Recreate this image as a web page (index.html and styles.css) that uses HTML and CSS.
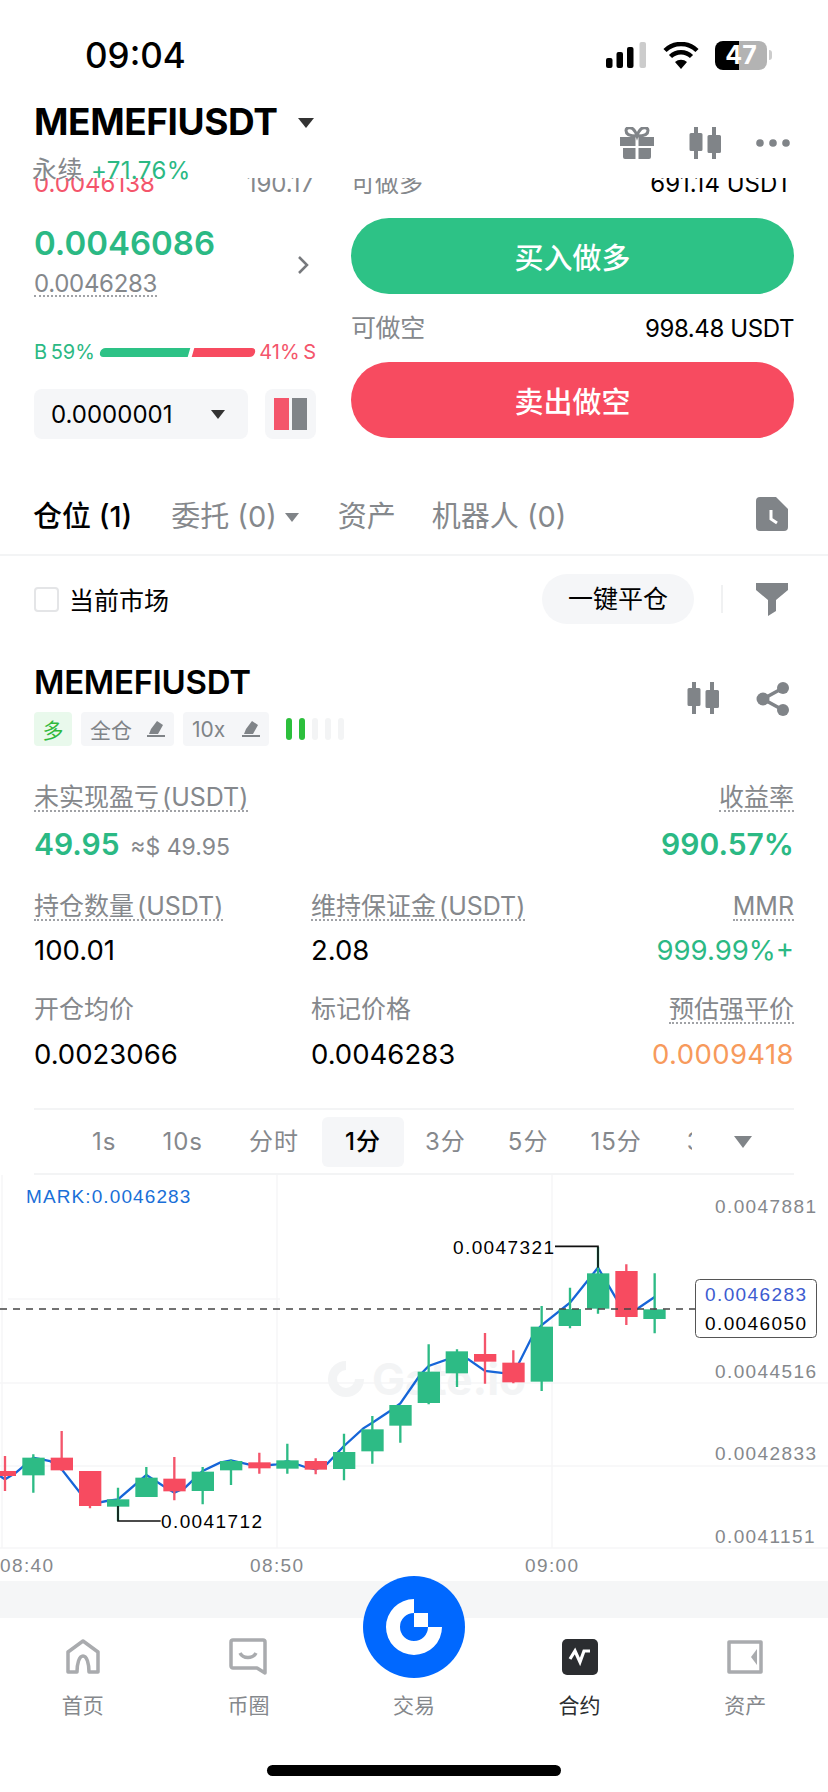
FILE: index.html
```html
<!DOCTYPE html>
<html lang="zh-CN">
<head>
    <meta charset="UTF-8">
    <meta name="viewport" content="width=device-width, initial-scale=1.0">
    <title>MEMEFIUSDT</title>
    <link rel="stylesheet" href="styles.css">
</head>
<body>

<div id="page">
    <div id="top">
        <div class="status-bar">
            <span class="clock">09:04</span>
            <div class="status-icons">
                <svg class="signal" width="40" height="26" viewBox="0 0 40 26">
                    <rect x="0" y="16" width="6.5" height="10" rx="2" fill="#000"/>
                    <rect x="10.5" y="10" width="6.5" height="16" rx="2" fill="#000"/>
                    <rect x="21" y="5" width="6.5" height="21" rx="2" fill="#000"/>
                    <rect x="33.5" y="0" width="6.5" height="26" rx="2" fill="#ccc"/>
                </svg>
                <svg class="wifi" width="36" height="27" viewBox="0 0 36 27">
                    <path d="M18 27l-6-7a9 9 0 0 1 12 0z" fill="#000"/>
                    <path d="M7.5 14.5a15 15 0 0 1 21 0" fill="none" stroke="#000" stroke-width="4.5"/>
                    <path d="M2 8.5a23 23 0 0 1 32 0" fill="none" stroke="#000" stroke-width="4.5"/>
                </svg>
                <span class="battery">47</span>
                <span class="battery-cap"></span>
            </div>
        </div>
        <div class="head-row">
            <div>
                <div class="pair-title">MEMEFIUSDT <span class="caret caret-title"></span></div>
                <div class="pair-sub"><span class="perp">永续</span> <span class="up">+71.76%</span></div>
            </div>
            <div class="head-icons">
                <svg width="34" height="32" viewBox="0 0 34 32" fill="#808488">
                    <path d="M0 10h15.5v9H0zM18.500 10H34v9H18.500zM3 21h12.500v11H5a2 2 0 0 1-2-2zM18.500 21H31v9a2 2 0 0 1-2 2H18.500z"/>
                    <path d="M16 9C10 9 6 7 6 3.500 6 0 11 0 13 2c2 1.500 3 4 4 7 1-3 2-5.500 4-7 2-2 7-2 7 1.500C28 7 24 9 18 9z" fill="none" stroke="#808488" stroke-width="3"/>
                </svg>
                <svg width="32" height="32" viewBox="0 0 32 32" fill="#808488">
                    <path d="M5 0h4v6h3a1.500 1.500 0 0 1 1.500 1.500v15A1.500 1.500 0 0 1 12 24H9v8H5v-8H2a1.500 1.500 0 0 1-1.500-1.500v-15A1.500 1.500 0 0 1 2 6h3z"/>
                    <path d="M23 0h4v8h3.500A1.500 1.500 0 0 1 32 9.500v15a1.500 1.500 0 0 1-1.500 1.500H27v6h-4v-6h-3a1.500 1.500 0 0 1-1.500-1.500v-15A1.500 1.500 0 0 1 20 8h3z"/>
                </svg>
                <svg width="34" height="32" viewBox="0 0 34 32" fill="#808488">
                    <circle cx="4" cy="16" r="3.800"/><circle cx="17" cy="16" r="3.800"/><circle cx="30" cy="16" r="3.800"/>
                </svg>
            </div>
        </div>
    </div>

    <div class="trade-panel">
        <div class="left-col">
            <div class="clip-row"><span class="down">0.0046138</span><span class="muted">190.17</span></div>
            <div class="price-row">
                <div>
                    <div class="last-price">0.0046086</div>
                    <div class="ref-price"><span>0.0046283</span></div>
                </div>
                <svg class="chevron" width="14" height="22" viewBox="0 0 14 22"><path d="M3 3l8 8-8 8" fill="none" stroke="#77797d" stroke-width="2.500"/></svg>
            </div>
            <div class="ratio-row">
                <span class="up">B 59%</span>
                <div class="ratio-bar"><i class="ratio-buy"></i><i class="ratio-sell"></i></div>
                <span class="down">41% S</span>
            </div>
            <div class="depth-row">
                <div class="depth-select"><span>0.0000001</span><span class="caret caret-dark"></span></div>
                <div class="depth-toggle"><i class="toggle-red"></i><i class="toggle-gray"></i></div>
            </div>
        </div>
        <div class="right-col">
            <div class="clip-row"><span class="muted">可做多</span><span>691.14 USDT</span></div>
            <button type="button" class="trade-btn buy-btn">买入做多</button>
            <div class="avail-row"><span class="muted">可做空</span><span>998.48 USDT</span></div>
            <button type="button" class="trade-btn sell-btn">卖出做空</button>
        </div>
    </div>

    <div class="tabs">
        <span class="tab tab-active">仓位 (1)</span>
        <span class="tab tab-orders">委托 (0)<span class="caret caret-gray"></span></span>
        <span class="tab tab-assets">资产</span>
        <span class="tab tab-bots">机器人 (0)</span>
        <svg class="tab-icon" width="32" height="34" viewBox="0 0 32 34">
            <path d="M4 0h16l12 12v18a4 4 0 0 1-4 4H4a4 4 0 0 1-4-4V4a4 4 0 0 1 4-4z" fill="#808488"/>
            <path d="M15 13v9l6 4" fill="none" stroke="#fff" stroke-width="3"/>
        </svg>
    </div>

    <div class="filter-row">
        <span class="check"></span>
        <span class="filter-label">当前市场</span>
        <span class="close-all">一键平仓</span>
        <span class="filter-sep"></span>
        <svg width="32" height="33" viewBox="0 0 32 33"><path d="M0 0H32V7L20 17V28L12 33V17L0 7Z" fill="#808488"/></svg>
    </div>

    <div class="position-head">
        <div>
            <div class="position-name">MEMEFIUSDT</div>
            <div class="tag-row">
                <span class="tag tag-long">多</span>
                <span class="tag tag-margin">全仓
                    <svg width="18" height="16" viewBox="0 0 18 16" fill="#808488"><path d="M10 0l6 4-5 9H2l2-5zM0 14h18v2H0z"/></svg>
                </span>
                <span class="tag tag-leverage">10x
                    <svg width="18" height="16" viewBox="0 0 18 16" fill="#808488"><path d="M10 0l6 4-5 9H2l2-5zM0 14h18v2H0z"/></svg>
                </span>
                <div class="adl">
                    <i class="on"></i><i class="on"></i><i></i><i></i><i></i>
                </div>
            </div>
        </div>
        <div class="position-icons">
            <svg width="32" height="32" viewBox="0 0 32 32" fill="#808488">
                <path d="M5 0h4v6h3a1.500 1.500 0 0 1 1.500 1.500v15A1.500 1.500 0 0 1 12 24H9v8H5v-8H2a1.500 1.500 0 0 1-1.500-1.500v-15A1.500 1.500 0 0 1 2 6h3z"/>
                <path d="M23 0h4v8h3.500A1.500 1.500 0 0 1 32 9.500v15a1.500 1.500 0 0 1-1.500 1.500H27v6h-4v-6h-3a1.500 1.500 0 0 1-1.500-1.500v-15A1.500 1.500 0 0 1 20 8h3z"/>
            </svg>
            <svg width="34" height="34" viewBox="0 0 34 34" fill="#808488">
                <path d="M27 6L7 17l20 11" fill="none" stroke="#808488" stroke-width="3.500"/>
                <circle cx="27" cy="6" r="6"/><circle cx="7" cy="17" r="6.500"/><circle cx="27" cy="28" r="6"/>
            </svg>
        </div>
    </div>

    <div class="stat-row stat-row-1">
        <div><div class="stat-label"><span>未实现盈亏 (USDT)</span></div><div class="stat-value big up">49.95 <small>≈$ 49.95</small></div></div>
        <div></div>
        <div class="stat-right"><div class="stat-label"><span>收益率</span></div><div class="stat-value big up">990.57%</div></div>
    </div>
    <div class="stat-row stat-row-2">
        <div><div class="stat-label"><span>持仓数量 (USDT)</span></div><div class="stat-value">100.01</div></div>
        <div><div class="stat-label"><span>维持保证金 (USDT)</span></div><div class="stat-value">2.08</div></div>
        <div class="stat-right"><div class="stat-label"><span>MMR</span></div><div class="stat-value up">999.99%+</div></div>
    </div>
    <div class="stat-row stat-row-3">
        <div><div class="stat-label plain">开仓均价</div><div class="stat-value">0.0023066</div></div>
        <div><div class="stat-label plain">标记价格</div><div class="stat-value">0.0046283</div></div>
        <div class="stat-right"><div class="stat-label"><span>预估强平价</span></div><div class="stat-value liq">0.0009418</div></div>
    </div>

    <div class="intervals">
        <div class="interval-list">
            <span>1s</span><span>10s</span><span>分时</span><span class="active">1分</span><span class="tight">3分</span><span class="tight">5分</span><span class="tight">15分</span><span class="cut">30分</span>
        </div>
        <span class="caret caret-interval"></span>
    </div>

    <svg class="chart" width="828" height="406" viewBox="0 1174 828 406">
        <g class="grid-lines">
            <path d="M8 1298H280M0 1382H828M0 1465H828M0 1547H828M2 1174V1547M277 1174V1547M552 1174V1547"/>
        </g>

        <!-- watermark -->
        <g class="watermark">
            <path d="M346 1360a18 18 0 1 0 18 18h-9a9 9 0 1 1-9-9z"/>
            <text x="372" y="1394">Gate.io</text>
        </g>

        <!-- candles, traced at 3x so the group is scaled back down -->
        <g transform="translate(0 1170) scale(.33333)">
            <polyline class="mark-line" points="0,915 15,925 48,905 100,860 150,870 185,895 240,965 270,1000 320,990 354,985 439,912 490,945 523,965 555,950 608,900 660,875 693,868 745,880 778,885 830,880 862,870 915,888 947,895 980,880 1032,825 1090,772 1117,755 1170,720 1201,697 1260,612 1286,585 1371,555 1405,565 1455,600 1540,610 1600,490 1625,462 1710,395 1794,290 1850,385 1879,430 1910,415 1964,378"/>
            <path class="wick-red" d="M15 855V960M185 780V900M270 900V1012M523 858V988M778 845V908M947 862V910M1455 486V638M1540 538V637M1879 280V462"/>
            <path class="wick-green" d="M100 850V965M354 950V1050M439 888V978M608 888V1000M693 866V942M862 818V908M1032 788V928M1117 735V878M1201 702V815M1286 520V700M1371 535V648M1625 405V660M1710 350V472M1794 228V428M1964 307V487"/>
            <g class="body-red">
                <rect x="-18" y="900" width="66" height="15"/>
                <rect x="152" y="860" width="67" height="38"/>
                <rect x="237" y="900" width="67" height="105"/>
                <rect x="490" y="923" width="67" height="38"/>
                <rect x="745" y="874" width="67" height="18"/>
                <rect x="914" y="870" width="67" height="26"/>
                <rect x="1422" y="549" width="67" height="23"/>
                <rect x="1507" y="575" width="67" height="59"/>
                <rect x="1846" y="300" width="67" height="138"/>
            </g>
            <g class="body-green">
                <rect x="67" y="860" width="67" height="53"/>
                <rect x="321" y="985" width="67" height="22"/>
                <rect x="406" y="920" width="67" height="58"/>
                <rect x="575" y="902" width="67" height="58"/>
                <rect x="660" y="870" width="67" height="28"/>
                <rect x="829" y="868" width="67" height="25"/>
                <rect x="999" y="843" width="67" height="51"/>
                <rect x="1084" y="775" width="67" height="66"/>
                <rect x="1168" y="702" width="67" height="62"/>
                <rect x="1253" y="602" width="67" height="94"/>
                <rect x="1337" y="541" width="67" height="66"/>
                <rect x="1592" y="467" width="67" height="165"/>
                <rect x="1676" y="414" width="67" height="51"/>
                <rect x="1761" y="307" width="67" height="106"/>
                <rect x="1930" y="415" width="67" height="29"/>
            </g>
            <path class="pointer" d="M354 1005V1050H482M1794 290V226H1665"/>
        </g>

        <path class="price-line" d="M0 1308H695"/>

        <text class="mark-text" x="26" y="1202">MARK:0.0046283</text>
        <text class="axis" x="715" y="1212">0.0047881</text>
        <text class="axis" x="715" y="1377">0.0044516</text>
        <text class="axis" x="715" y="1459">0.0042833</text>
        <text class="axis" x="715" y="1542">0.0041151</text>
        <text class="hilo" x="161" y="1527">0.0041712</text>
        <text class="hilo" x="453" y="1253">0.0047321</text>
        <rect class="price-box" x="695.500" y="1278.500" width="121" height="58" rx="4"/>
        <text class="box-mark" x="705" y="1300">0.0046283</text>
        <text class="box-last" x="705" y="1329">0.0046050</text>
        <text class="time" x="0" y="1571">08:40</text>
        <text class="time" x="250" y="1571">08:50</text>
        <text class="time" x="525" y="1571">09:00</text>
    </svg>

    <div class="gray-band"></div>

    <div class="bottom-nav">
        <div class="nav-item">
            <svg width="36" height="38" viewBox="0 0 36 38"><path d="M3 34V14L18 3l15 11v20h-9c0-8-2-16-6-16s-6 8-6 16z" fill="none" stroke="#a9abae" stroke-width="3.500" stroke-linejoin="round"/></svg>
            <span>首页</span>
        </div>
        <div class="nav-item">
            <svg width="38" height="38" viewBox="0 0 38 38"><path d="M2 4a2 2 0 0 1 2-2h30a2 2 0 0 1 2 2v31l-8-5H4a2 2 0 0 1-2-2z" fill="none" stroke="#a9abae" stroke-width="3.500" stroke-linejoin="round"/><path d="M11 15c3 6 13 6 16 0" fill="none" stroke="#a9abae" stroke-width="3.500"/></svg>
            <span>币圈</span>
        </div>
        <div class="nav-item">
            <div class="nav-spacer"></div>
            <span>交易</span>
            <div class="gate-btn">
                <svg width="102" height="102" viewBox="0 0 102 102"><path d="M51 23A28 28 0 1 0 79 51H65A14 14 0 1 1 51 37Z" fill="#fff"/><rect x="51" y="37" width="14" height="14" fill="#fff"/></svg>
            </div>
        </div>
        <div class="nav-item nav-active">
            <svg width="36" height="38" viewBox="0 0 36 38"><rect width="36" height="36" y="1" rx="5" fill="#2b2d30"/><path d="M8 22l5-8 5 11 4-11 6 0" transform="translate(0 -1)" fill="none" stroke="#fff" stroke-width="3.200"/></svg>
            <span>合约</span>
        </div>
        <div class="nav-item">
            <svg width="38" height="36" viewBox="0 0 38 36"><path d="M3 3h32v30H3z" fill="none" stroke="#a9abae" stroke-width="3.500" stroke-linejoin="round"/><path d="M31 10l-6 8 6 8z" fill="#a9abae"/></svg>
            <span>资产</span>
        </div>
    </div>

    <div class="home-bar"></div>
</div>

</body>
</html>
```

FILE: styles.css
```css
* {
    box-sizing: border-box;
}

body {
    margin: 0;
    padding: 0;
    background-color: #fff;
    font-family: 'Inter', 'Noto Sans CJK SC', sans-serif;
    color: #000;
}

#page {
    width: 828px;
    height: 1792px;
    overflow: hidden;
    position: relative;
}

i {
    display: block;
}

.up {
    color: #2bb984;
}

.down {
    color: #f4556b;
}

.muted {
    color: #85888c;
}

/* carets */
.caret {
    display: inline-block;
    width: 0;
    height: 0;
    border-style: solid;
    border-color: #333 transparent transparent transparent;
}

.caret-title {
    border-width: 10px 8px 0 8px;
    margin-left: 12px;
    vertical-align: 7px;
}

.caret-dark {
    border-width: 9px 7px 0 7px;
}

.caret-gray {
    border-width: 9px 7px 0 7px;
    border-top-color: #808488;
    margin-left: 8px;
    vertical-align: 5px;
}

.caret-interval {
    border-width: 12px 9px 0 9px;
    border-top-color: #808488;
    margin-left: 42px;
}

/* header */
#top {
    height: 178px;
    position: relative;
    z-index: 1;
    background-color: #fff;
}

.status-bar {
    height: 104px;
    display: flex;
    justify-content: space-between;
    padding: 36px 56px 0 85px;
}

.clock {
    font-size: 35px;
    font-weight: 500;
    line-height: 38px;
}

.status-icons {
    display: flex;
    align-items: center;
    height: 38px;
}

.wifi {
    margin-left: 17px;
}

.battery {
    width: 52px;
    height: 29px;
    margin-left: 16px;
    border-radius: 8px;
    background: linear-gradient(90deg, #000 46%, #b3b3b3 46%);
    color: #fff;
    font-size: 25px;
    font-weight: 700;
    line-height: 29px;
    text-align: center;
}

.battery-cap {
    width: 3px;
    height: 10px;
    margin-left: 2px;
    border-radius: 0 3px 3px 0;
    background-color: #ccc;
}

.head-row {
    display: flex;
    justify-content: space-between;
    padding: 0 38px 0 34px;
}

.pair-title {
    font-size: 37px;
    font-weight: 700;
    line-height: 36px;
    letter-spacing: -0.4px;
    white-space: nowrap;
}

.pair-sub {
    margin-top: 14px;
    margin-left: -2px;
    font-size: 24px;
    line-height: 32px;
    letter-spacing: 0.4px;
    white-space: nowrap;
}

.perp {
    color: #85888c;
    font-size: 25px;
    margin-right: 1px;
}

.head-icons {
    display: flex;
    gap: 35px;
    margin-top: 23px;
}

/* trade panel */
.trade-panel {
    display: grid;
    grid-template-columns: 282px 443px;
    column-gap: 35px;
    padding: 0 34px;
}

.clip-row {
    height: 16px;
    overflow: hidden;
    display: flex;
    justify-content: space-between;
    align-items: flex-end;
    padding-right: 2px;
    font-size: 24px;
    line-height: 20px;
}

.price-row {
    display: flex;
    justify-content: space-between;
    align-items: center;
    margin-top: 29px;
    padding-right: 6px;
}

.last-price {
    color: #2bb984;
    font-size: 33px;
    font-weight: 600;
    line-height: 40px;
}

.ref-price {
    margin-top: 9px;
    color: #85888c;
    font-size: 24px;
    line-height: 24px;
    letter-spacing: -0.3px;
}

.ref-price span {
    display: inline-block;
    line-height: 22px;
    border-bottom: 2px dotted #a0a2a6;
}

.chevron {
    margin-top: 10px;
}

.ratio-row {
    display: flex;
    justify-content: space-between;
    align-items: center;
    height: 20px;
    margin-top: 45px;
    font-size: 20px;
    word-spacing: -2px;
    white-space: nowrap;
}

.ratio-bar {
    display: flex;
    gap: 4px;
    flex: 1;
    margin: 0 5px;
    height: 9px;
}

.ratio-buy {
    flex: 59;
    background-color: #2dc286;
    border-radius: 5px 0 0 5px;
    transform: skewX(-16deg);
}

.ratio-sell {
    flex: 41;
    background-color: #f74b60;
    border-radius: 0 5px 5px 0;
    transform: skewX(-16deg);
}

.depth-row {
    display: flex;
    justify-content: space-between;
    margin-top: 27px;
}

.depth-select {
    width: 214px;
    height: 50px;
    padding: 0 23px 0 17px;
    display: flex;
    justify-content: space-between;
    align-items: center;
    border-radius: 8px;
    background-color: #f5f6f8;
    font-size: 24px;
}

.depth-toggle {
    width: 51px;
    height: 50px;
    display: flex;
    justify-content: center;
    align-items: center;
    gap: 3px;
    border-radius: 8px;
    background-color: #f5f6f8;
}

.depth-toggle i {
    width: 15px;
    height: 32px;
}

.toggle-red {
    background-color: #f4556b;
}

.toggle-gray {
    background-color: #808488;
}

.right-col {
    min-width: 0;
}

.trade-btn {
    display: block;
    width: 100%;
    height: 76px;
    border: none;
    border-radius: 38px;
    color: #fff;
    font-family: inherit;
    font-size: 29px;
    font-weight: 500;
}

.buy-btn {
    margin-top: 24px;
    background-color: #2dc286;
}

.sell-btn {
    background-color: #f74b60;
}

.avail-row {
    height: 68px;
    display: flex;
    justify-content: space-between;
    align-items: center;
    font-size: 24px;
    letter-spacing: -0.4px;
}

.avail-row .muted {
    font-size: 25px;
    margin-bottom: 4px;
}

/* tabs */
.tabs {
    height: 80px;
    margin-top: 37px;
    padding: 0 40px 3px 33px;
    display: flex;
    align-items: center;
    border-bottom: 2px solid #f3f4f5;
    font-size: 29px;
    color: #85888c;
    white-space: nowrap;
}

.tab-active {
    color: #000;
    font-weight: 500;
}

.tab-orders {
    margin-left: 39px;
}

.tab-assets {
    margin-left: 39px;
}

.tab-bots {
    margin-left: 36px;
}

.tab-icon {
    margin-left: auto;
}

.filter-row {
    height: 88px;
    padding: 0 40px 2px 34px;
    display: flex;
    align-items: center;
}

.check {
    width: 25px;
    height: 25px;
    border: 2px solid #e4e5e7;
    border-radius: 4px;
}

.filter-label {
    margin-left: 10px;
    font-size: 25px;
}

.close-all {
    margin-left: auto;
    width: 152px;
    height: 50px;
    border-radius: 25px;
    background-color: #f5f6f8;
    font-size: 25px;
    line-height: 50px;
    text-align: center;
}

.filter-sep {
    width: 2px;
    height: 28px;
    margin: 0 33px 0 27px;
    background-color: #f0f1f2;
}

/* position */
.position-head {
    margin-top: 19px;
    padding: 0 38px 0 34px;
    display: flex;
    justify-content: space-between;
}

.position-name {
    font-size: 33px;
    font-weight: 600;
    line-height: 38px;
    letter-spacing: -0.3px;
}

.tag-row {
    display: flex;
    align-items: center;
    gap: 9px;
    margin-top: 11px;
}

.tag {
    height: 34px;
    padding: 0 9px;
    display: flex;
    justify-content: space-between;
    align-items: center;
    border-radius: 4px;
    background-color: #f5f6f8;
    color: #808488;
    font-size: 21px;
}

.tag-long {
    width: 38px;
    justify-content: center;
    background-color: #e9f9ec;
    color: #2fb83c;
}

.tag-margin {
    width: 93px;
}

.tag-leverage {
    width: 86px;
}

.adl {
    display: flex;
    gap: 7px;
    margin-left: 8px;
}

.adl i {
    width: 6px;
    height: 22px;
    border-radius: 3px;
    background-color: #f3f4f5;
}

.adl .on {
    background-color: #2cbf3c;
}

.position-icons {
    display: flex;
    gap: 37px;
    padding-top: 19px;
}

.stat-row {
    display: grid;
    grid-template-columns: 277px 1fr auto;
    padding: 0 34px;
}

.stat-row-1 {
    margin-top: 37px;
}

.stat-row-1 .stat-label {
    margin-bottom: 14px;
}

.stat-row-2 {
    margin-top: 28px;
}

.stat-row-2 .stat-label {
    margin-bottom: 11px;
}

.stat-row-3 {
    margin-top: 28px;
}

.stat-row-3 .stat-label {
    margin-bottom: 12px;
}

.stat-label {
    height: 30px;
    line-height: 28px;
    color: #85888c;
    font-size: 25px;
    word-spacing: -4px;
    white-space: nowrap;
}

.stat-label span {
    display: inline-block;
    line-height: 26px;
    border-bottom: 2px dotted #a0a2a6;
}

.stat-value {
    font-size: 27.5px;
    line-height: 34px;
    white-space: nowrap;
}

.stat-value.big {
    font-size: 30px;
    font-weight: 600;
}

.stat-value small {
    margin-left: 3px;
    color: #85888c;
    font-size: 23px;
    font-weight: 400;
}

.stat-right {
    text-align: right;
}

.liq {
    color: #f79a5c;
    letter-spacing: 0.4px;
}

/* intervals */
.intervals {
    height: 67px;
    margin: 37px 34px 0;
    padding-left: 35px;
    display: flex;
    align-items: center;
    border-top: 2px solid #f3f4f5;
    border-bottom: 2px solid #f3f4f5;
}

.interval-list {
    width: 623px;
    height: 50px;
    overflow: hidden;
    display: flex;
    flex: none;
    color: #85888c;
    font-size: 24px;
    line-height: 50px;
    letter-spacing: 1px;
    white-space: nowrap;
}

.interval-list span {
    padding: 0 23px;
    flex: none;
}

.interval-list .tight {
    padding: 0 21px;
}

.interval-list .cut {
    padding-left: 24px;
}

.interval-list .active {
    border-radius: 6px;
    background-color: #f5f6f8;
    color: #000;
    font-weight: 500;
}

/* chart */
.chart {
    display: block;
    font-family: 'Liberation Sans', sans-serif;
}

.grid-lines path {
    fill: none;
    stroke: #f6f6f7;
    stroke-width: 1.500;
}

.watermark {
    fill: #f3f4f5;
}

.watermark text {
    font-family: 'Inter', sans-serif;
    font-size: 44px;
    font-weight: 700;
}

.mark-line {
    fill: none;
    stroke: #1665d8;
    stroke-width: 7;
}

.wick-red {
    fill: none;
    stroke: #f4556b;
    stroke-width: 7;
}

.wick-green {
    fill: none;
    stroke: #2dbb85;
    stroke-width: 7;
}

.body-red rect {
    fill: #f74b60;
}

.body-green rect {
    fill: #2dbb85;
}

.pointer {
    fill: none;
    stroke: #111;
    stroke-width: 5;
}

.price-line {
    fill: none;
    stroke: #444;
    stroke-width: 1.500;
    stroke-dasharray: 7 6;
}

.mark-text {
    fill: #1a6fd8;
    font-size: 19px;
    letter-spacing: 1.1px;
}

.axis,
.time {
    fill: #85888c;
    font-size: 19px;
    letter-spacing: 1.4px;
}

.hilo {
    fill: #000;
    font-size: 19px;
    letter-spacing: 1.4px;
}

.price-box {
    fill: #fff;
    stroke: #555;
    stroke-width: 1;
}

.box-mark {
    fill: #3d5bd0;
    font-size: 19px;
    letter-spacing: 1.4px;
}

.box-last {
    fill: #000;
    font-size: 19px;
    letter-spacing: 1.4px;
}

.gray-band {
    height: 37px;
    background-color: #f5f6f7;
}

/* bottom nav */
.bottom-nav {
    display: flex;
    padding-top: 20px;
}

.nav-item {
    flex: 1;
    position: relative;
    display: flex;
    flex-direction: column;
    align-items: center;
    color: #85888c;
    font-size: 21px;
}

.nav-item svg {
    display: block;
}

.nav-item > svg {
    height: 38px;
}

.nav-item span {
    margin-top: 16px;
    line-height: 28px;
}

.nav-active {
    color: #2b2d30;
}

.nav-spacer {
    height: 38px;
}

.gate-btn {
    position: absolute;
    top: -62px;
    left: 32px;
    width: 102px;
    height: 102px;
    border-radius: 50%;
    background-color: #0068ff;
}

.home-bar {
    width: 294px;
    height: 11px;
    margin: 45px auto 0;
    border-radius: 6px;
    background-color: #000;
}
```
